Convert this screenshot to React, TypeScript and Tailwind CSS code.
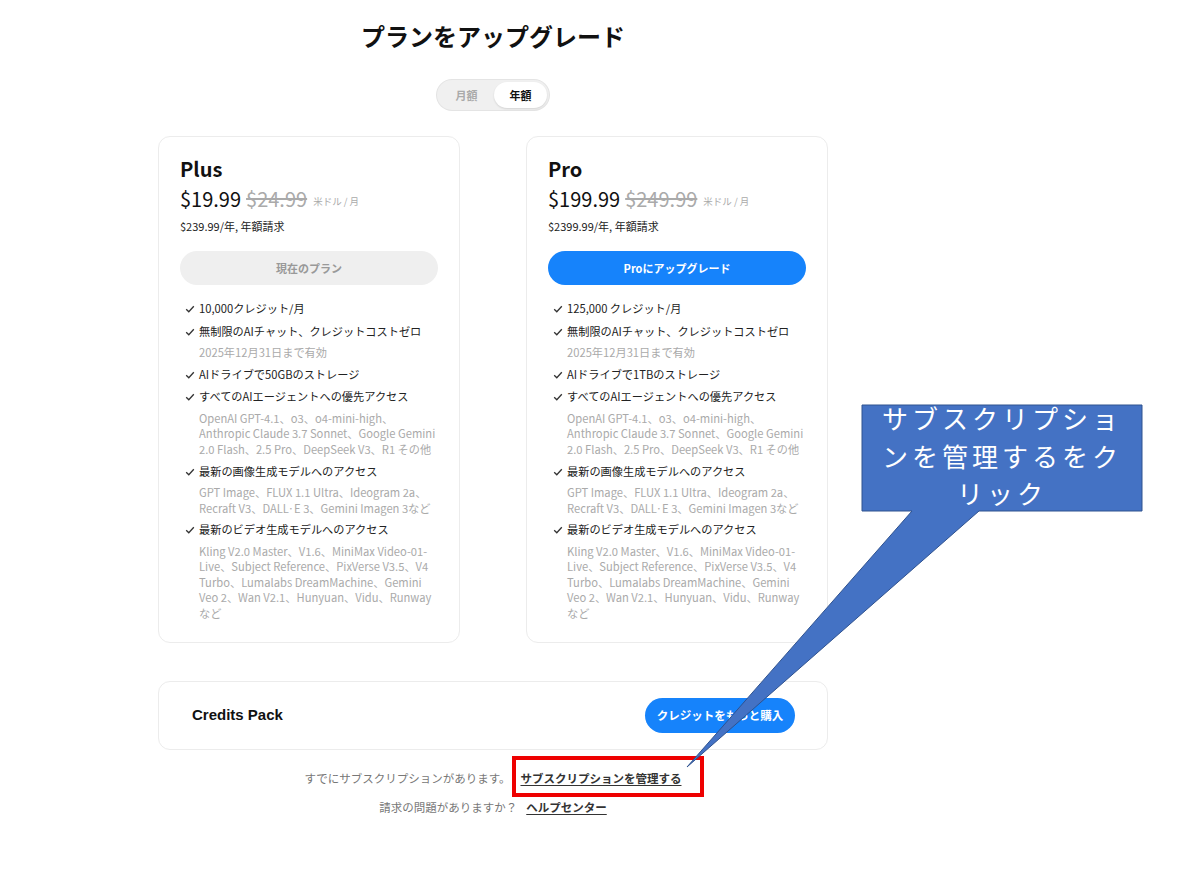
import React from "react";

type Feature = { text: string; sub?: string[] };

const Check = () => (
  <svg width="10" height="10" viewBox="0 0 10 10" className="mt-[4px] shrink-0">
    <polyline points="1.2,5.2 3.8,7.8 8.8,2.2" fill="none" stroke="#333" strokeWidth="1.3" />
  </svg>
);

const plusFeatures: Feature[] = [
  { text: "10,000クレジット/月" },
  { text: "無制限のAIチャット、クレジットコストゼロ", sub: ["2025年12月31日まで有効"] },
  { text: "AIドライブで50GBのストレージ" },
  {
    text: "すべてのAIエージェントへの優先アクセス",
    sub: [
      "OpenAI GPT-4.1、o3、o4-mini-high、",
      "Anthropic Claude 3.7 Sonnet、Google Gemini",
      "2.0 Flash、2.5 Pro、DeepSeek V3、R1 その他",
    ],
  },
  {
    text: "最新の画像生成モデルへのアクセス",
    sub: ["GPT Image、FLUX 1.1 Ultra、Ideogram 2a、", "Recraft V3、DALL·E 3、Gemini Imagen 3など"],
  },
  {
    text: "最新のビデオ生成モデルへのアクセス",
    sub: [
      "Kling V2.0 Master、V1.6、MiniMax Video-01-",
      "Live、Subject Reference、PixVerse V3.5、V4",
      "Turbo、Lumalabs DreamMachine、Gemini",
      "Veo 2、Wan V2.1、Hunyuan、Vidu、Runway",
      "など",
    ],
  },
];

const proFeatures: Feature[] = plusFeatures.map((f, i) =>
  i === 0 ? { text: "125,000 クレジット/月" } : i === 2 ? { text: "AIドライブで1TBのストレージ" } : f
);

function Card(props: {
  name: string;
  price: string;
  old: string;
  annual: string;
  current?: boolean;
  button: string;
  features: Feature[];
}) {
  return (
    <div className="w-[302px] rounded-[12px] border border-[#ececec] bg-white px-[21px] pt-[19px] pb-[21px]">
      <div className="text-[20px] font-bold leading-[26px] text-[#111]">{props.name}</div>
      <div className="mt-[2px] flex h-[30px] items-center">
        <span className="text-[20px] leading-[30px] text-[#111]">{props.price}</span>
        <span className="ml-[5px] text-[20px] leading-[30px] text-[#aaa] line-through decoration-[1.5px]">{props.old}</span>
        <span className="ml-[6px] mt-[4px] text-[9.5px] leading-[14px] text-[#aaa]">米ドル / 月</span>
      </div>
      <div className="mt-[4px] text-[11px] leading-[16px] text-[#222]">{props.annual}</div>
      {props.current ? (
        <div className="mt-[17px] flex h-[34px] items-center justify-center rounded-full bg-[#efefef] text-[11px] font-bold text-[#999]">
          {props.button}
        </div>
      ) : (
        <div className="mt-[17px] flex h-[34px] items-center justify-center rounded-full bg-[#1683fb] text-[11px] font-bold text-white">
          {props.button}
        </div>
      )}
      <div className="mt-[15px] flex flex-col gap-[5.5px] pl-[5px]">
        {props.features.map((f, i) => (
          <div key={i}>
            <div className="flex gap-[4px] text-[11.2px] leading-[17px] text-[#222]">
              <Check />
              <span className="whitespace-nowrap">{f.text}</span>
            </div>
            {f.sub && (
              <div className="mt-[5.5px] pl-[14px] text-[11.2px] leading-[15.4px] text-[#aaa]">
                {f.sub.map((s, j) => (
                  <div key={j} className="whitespace-nowrap">
                    {s}
                  </div>
                ))}
              </div>
            )}
          </div>
        ))}
      </div>
    </div>
  );
}

export default function App() {
  return (
    <div
      className="relative h-[883px] w-[1200px] overflow-hidden bg-white"
      style={{ fontFamily: '"Noto Sans CJK JP", "Noto Sans", sans-serif' }}
    >
      <div className="ml-[158px] flex w-[670px] flex-col items-center pt-[20px]">
        <h1 className="text-[24px] font-bold leading-[32px] text-[#111]">プランをアップグレード</h1>
        <div className="mt-[28px] flex h-[30px] w-[112px] items-center rounded-full bg-[#f0f0f0] p-[2px] shadow-[0_0_0_1px_#e4e4e4]">
          <div className="flex h-full flex-1 items-center justify-center text-[11px] font-bold text-[#aaa]">月額</div>
          <div className="flex h-full w-[53px] items-center justify-center rounded-full bg-white text-[11px] font-bold text-[#111] shadow-[0_1px_2px_rgba(0,0,0,0.12)]">
            年額
          </div>
        </div>
        <div className="mt-[26px] flex w-full items-start justify-between">
          <Card
            name="Plus"
            price="$19.99"
            old="$24.99"
            annual="$239.99/年, 年額請求"
            current
            button="現在のプラン"
            features={plusFeatures}
          />
          <Card
            name="Pro"
            price="$199.99"
            old="$249.99"
            annual="$2399.99/年, 年額請求"
            button="Proにアップグレード"
            features={proFeatures}
          />
        </div>
        <div className="mt-[38px] flex h-[69px] w-full items-center justify-between rounded-[12px] border border-[#ececec] bg-white pl-[33px] pr-[32px]">
          <span
            className="text-[15px] font-bold text-[#111]"
            style={{ fontFamily: '"Liberation Sans", Arial, sans-serif' }}
          >
            Credits Pack
          </span>
          <div className="flex h-[35px] w-[150px] items-center justify-center rounded-full bg-[#1683fb] text-[11.5px] font-bold text-white">
            クレジットをもっと購入
          </div>
        </div>
        <div className="mt-[20px] flex h-[18px] items-center text-[11.5px] text-[#777]">
          すでにサブスクリプションがあります。
          <span className="ml-[10px] font-bold text-[#333] underline underline-offset-2">サブスクリプションを管理する</span>
        </div>
        <div className="mt-[11px] flex h-[18px] items-center text-[11.5px] text-[#777]">
          請求の問題がありますか？
          <span className="ml-[9px] font-bold text-[#333] underline underline-offset-2">ヘルプセンター</span>
        </div>
      </div>

      {/* red highlight box */}
      <div className="absolute left-[512px] top-[756px] h-[41px] w-[192px] border-[4px] border-[#ee0000]" />

      {/* callout */}
      <svg className="absolute left-0 top-0" width="1200" height="883" viewBox="0 0 1200 883">
        <path
          d="M862,405 H1142 V511 H979 L687,767 L912,511 H862 Z"
          fill="#4472c4"
          stroke="#2f528f"
          strokeWidth="1"
        />
      </svg>
      <div className="absolute left-[862px] top-[399px] w-[280px] text-center text-[26px] leading-[37.5px] tracking-[4px] text-white">
        <div>サブスクリプショ</div>
        <div>ンを管理するをク</div>
        <div>リック</div>
      </div>
    </div>
  );
}
